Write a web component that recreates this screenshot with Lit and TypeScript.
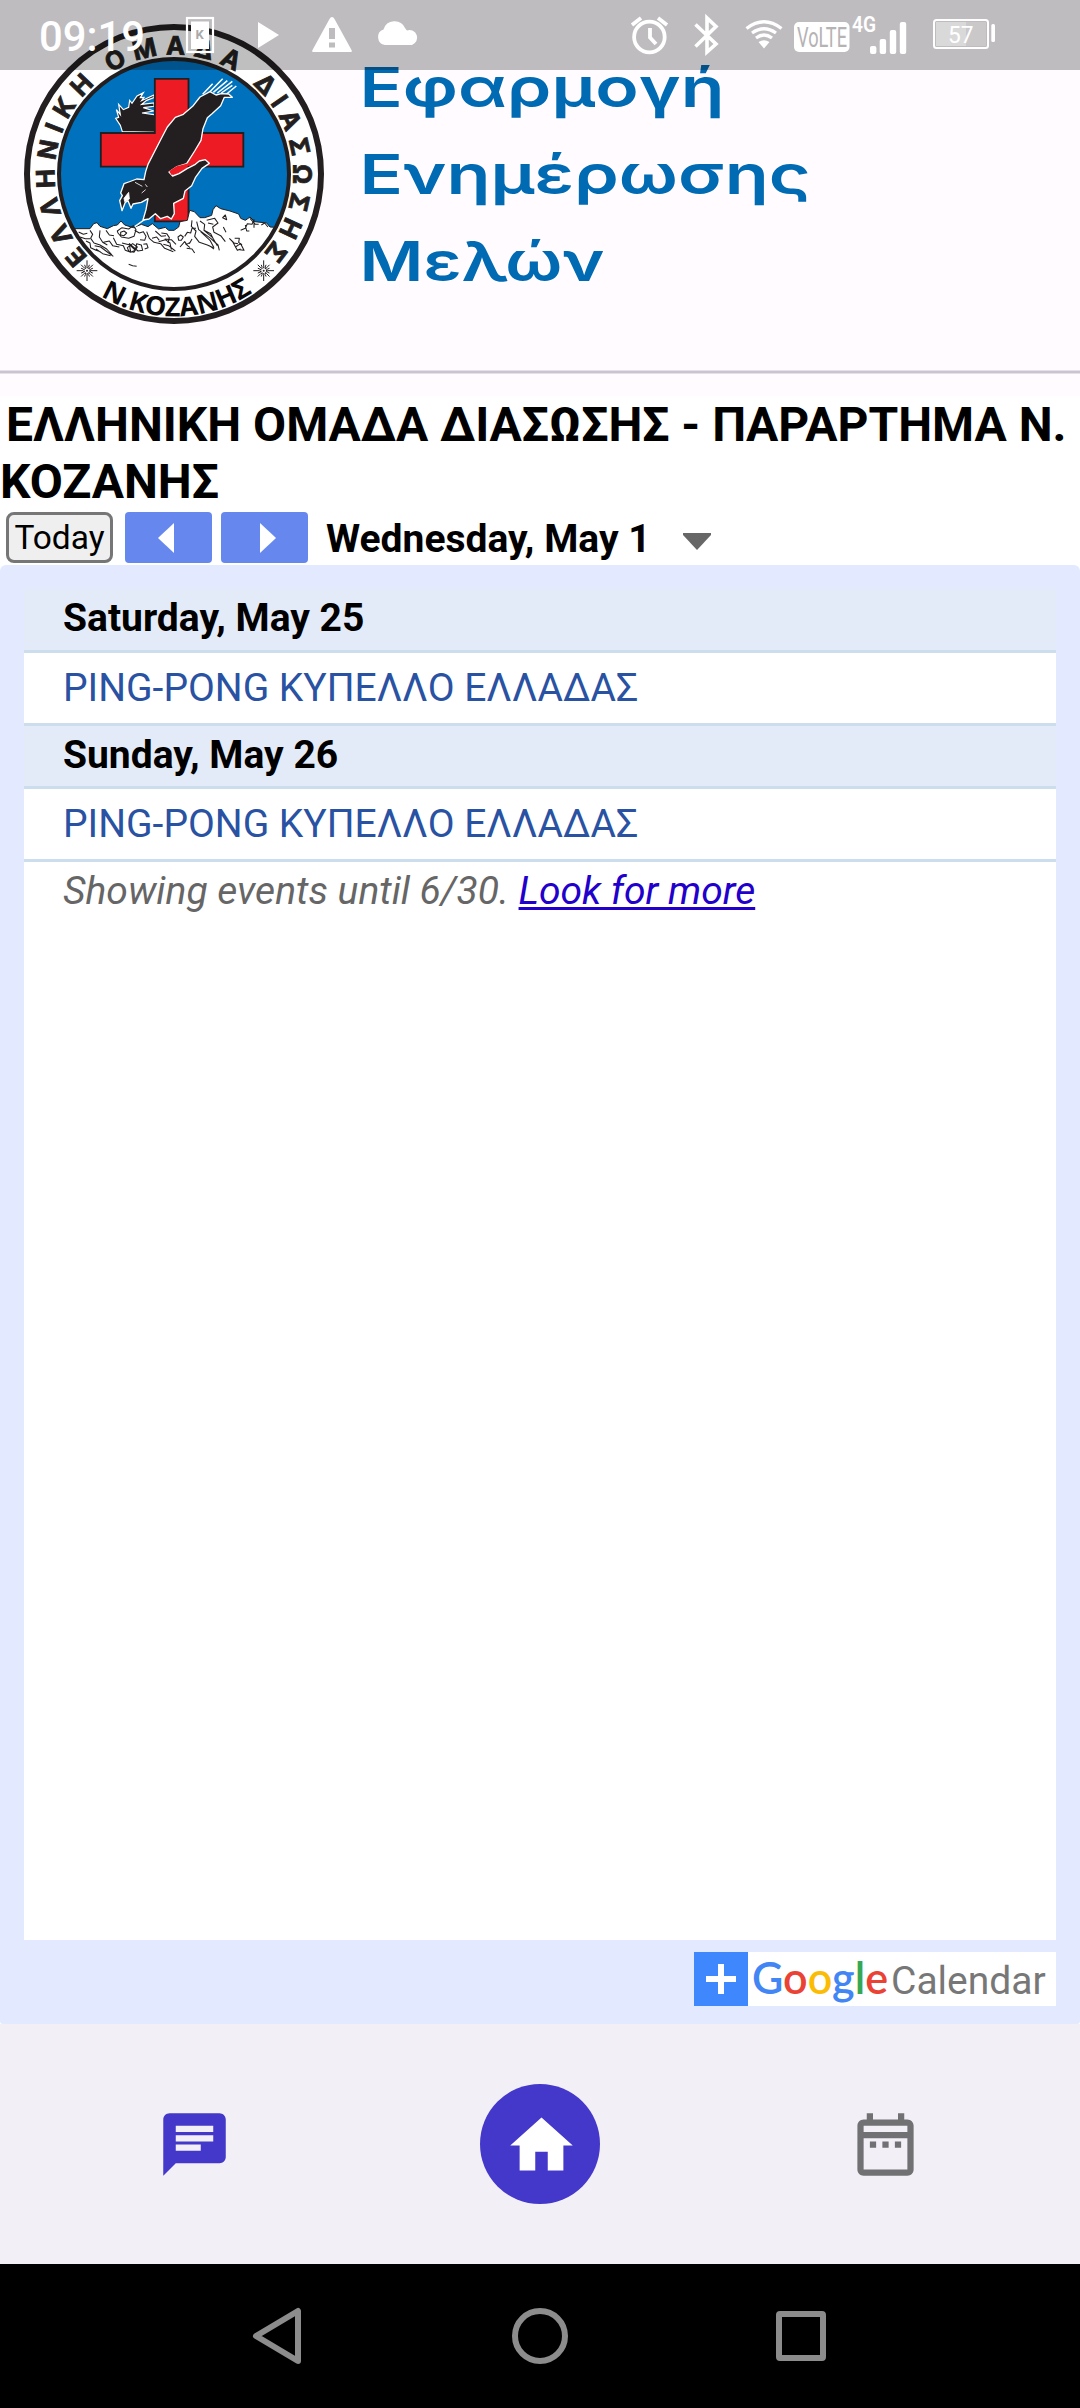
import { LitElement, html, css, svg } from "lit";
import { customElement, property } from "lit/decorators.js";

interface DayGroup {
  day: string;
  events: string[];
}

const DAYS: DayGroup[] = [
  { day: "Saturday, May 25", events: ["PING-PONG ΚΥΠΕΛΛΟ ΕΛΛΑΔΑΣ"] },
  { day: "Sunday, May 26", events: ["PING-PONG ΚΥΠΕΛΛΟ ΕΛΛΑΔΑΣ"] },
];

/* Point on a circle around the emblem centre; angle is measured clockwise from the top. */
const polar = (r: number, deg: number) => {
  const a = (deg * Math.PI) / 180;
  return `${(522 + r * Math.sin(a)).toFixed(1)} ${(521 - r * Math.cos(a)).toFixed(1)}`;
};

const star = (cx: number, cy: number) => {
  let d = "";
  for (let i = 0; i < 16; i++) {
    const a = (i * Math.PI) / 8;
    const r = i % 4 === 0 ? 31 : i % 2 === 0 ? 25 : 19;
    d += `M${cx + 12 * Math.cos(a)} ${cy + 12 * Math.sin(a)}L${cx + r * Math.cos(a)} ${cy + r * Math.sin(a)}`;
  }
  return svg`<path d=${d} stroke="#231f20" stroke-width="3" fill="none"/>
    <circle cx=${cx} cy=${cy} r="9.500" fill="none" stroke="#231f20" stroke-width="5" stroke-dasharray="4 2"/>
    <circle cx=${cx} cy=${cy} r="3" fill="#231f20"/>`;
};

@customElement("team-emblem")
class TeamEmblem extends LitElement {
  static styles = css`
    :host { display: block; width: 300px; height: 300px; flex: none; }
    svg { display: block; width: 100%; height: 100%; }
    .ring { font-family: Inter, "Open Sans", sans-serif; font-weight: 700; font-size: 76px; fill: #231f20; stroke: #231f20; stroke-width: 2.500px; }
    .town { font-family: "Noto Sans", "Open Sans", sans-serif; font-weight: 700; font-size: 79px; fill: #0a0809; }
  `;

  render() {
    return html`<svg viewBox="72 71 900 900">
      <defs>
        <clipPath id="disc"><circle cx="522" cy="521" r="343" /></clipPath>
        <path id="w1" d="M${polar(358, -134)}A358 358 0 0 1 ${polar(358, -20)}" />
        <path id="w2" d="M${polar(358, -32)}A358 358 0 0 1 ${polar(358, 60)}" />
        <path id="w3" d="M${polar(358, 41)}A358 358 0 0 1 ${polar(358, 150)}" />
        <path id="w4" d="M${polar(427, 211)}A427 427 0 0 0 ${polar(427, 130)}" />
      </defs>
      <circle cx="522" cy="521" r="441" fill="#fff" stroke="#231f20" stroke-width="18" />
      <g clip-path="url(#disc)">
        <rect x="170" y="170" width="710" height="710" fill="#0071bc" />
        <path d="M367 394L361 375L347 354L356 351L349 328L361 343L356 312L370 328L386 321L389 300L396 309L411 287L430 277L421 292L432 291L425 301L462 284V292L440 300L425 312L462 308V318L430 322L462 332L426 338L462 343H470V396z" fill="#231f20" stroke="#fff" stroke-width="3.5" />
        <path d="M464.500 235.500H565.500V398H730V499H565.500V663H464.500V499H302.500V398H464.500z" fill="#ed1c24" stroke="#231f20" stroke-width="5.500" />
        <path d="M150 690L215 685H270L281 670L291 667L300 678L322 685L340 676L352 674L363 662L374 674L400 682L424 672L444 679L457 670L476 686L496 681L506 690H522L536 680L540 664L562 660L569 630L583 634L600 652H614L635 645L639 628L648 616L662 625L690 632L716 641L722 654L736 660L750 650L764 664L800 668L810 680L860 683V900H150z" fill="#fff" stroke="#231f20" stroke-width="3" />
        <g fill="none" stroke="#231f20" stroke-width="3.200" stroke-linejoin="round">
          <path d="M236 695l14 7 12-3M240 710l16 5 14 0M258 722l12 6 2 14 16 8 14 4M270 690l8 12-6 12 10 14 18 6 20 12 16 18M284 736l18 4 24 18 14 10M288 746l20 14 24 6M300 690l-2 20 10 16 14 8M310 726l18-4 10 14 20 4M318 690l10 14 14 2" />
          <path d="M352 692l14-10 20 4 14-10 8 12-6 20-16 6-22-4-10-12zM362 696l10-4 8 6-8 8-10-2zM404 690l14 8 12-4 8 14-4 12-14-2M340 712l10 20 20 4 6 14 16 6M366 728l24 6 14 14 8-10M382 742l16-12 14 10-10 16-16-4zM388 730l4 26 14-6 4-20 14 4 4 16-14 2zM430 732l10-2 4 12-10 4" />
          <path d="M440 694l8 20 14 12 20 4 12 14 26 10M456 714l14-4 8 10M466 692l18 16 14-2M484 698l16 2 8 12-4 16M476 724l20-6 14 10 4 20M490 732l16 4 20 16M494 716l20 2 14 14M534 710l8-6 8 6-6 10-8 0zM540 740l14-16 6 8 10-6M554 708l8-12 10 2 4-14 12 0M560 744l16 2 8 12M556 730l14 12M576 716l-8 14" />
          <path d="M576 660l-2 18 14 14-4 16 14 18 24 8 18 8M590 664l6 24 16 12 20 14 22 20 4 16M600 662l14 10-2 18 20 10 8 16M602 694l28 26 12 22M612 690l26 22 14 24M620 660l24-6 10 14-16 12 4 16 20 10 14 18M640 672l-16-4M668 652l8-8 4 14zM670 680l8 16M688 714l14 14 12 2M704 714l14 0-2 12 10 8M698 724l14 26 10-4M628 736l14 10" />
          <path d="M722 690l14-6 6-14 14 2 6-14 0 24M736 674l4 18 8 0M750 654l16 18 10 0M784 674l10-6 10 12M706 740l16-10 10 20-14-2M386 792l12 4 12 2" />
        </g>
        <path d="M608 282L638 250M626 278L668 235M640 276L682 241M652 278L697 243M664 278L697 255M676 284L709 257M404 679L436 656" stroke="#fff" stroke-width="4.500" fill="none" />
        <path d="M600 290L578 318L550 342L526 351L502 380L480 422L463 455L444 492L437 514L432 538L410 536L386 545L372 550L362 578L367 586L359 601L366 631L376 606L384 601L393 624L399 611L424 606L444 595L438 628L429 659L447 656L466 640L482 655L502 648L514 656L523 640L521 609L550 594L555 572L575 556L586 532L606 504L628 489L616 478L598 482L586 492L561 505L537 520L518 527L507 515L529 500L560 490L584 452L603 420L609 385L622 352L636 340L662 316L673 291H697L686 281L664 280L648 284L630 274z" fill="#231f20" stroke="#fff" stroke-width="4" stroke-linejoin="round" />
        <path d="M508 512L530 498L566 489L590 482L580 491L556 498L532 508L514 524z" fill="#ed1c24" />
        <path d="M372 594l14-18 2 20-14 8zM436 552l6 8M425 578l12-10M405 546l22 12" fill="#fff" stroke="#fff" stroke-width="2.500" />
      </g>
      <circle cx="522" cy="521" r="345" fill="none" stroke="#231f20" stroke-width="12" />
      <text class="ring"><textPath href="#w1" textLength="578">ΕΛΛΗΝΙΚΗ</textPath></text>
      <text class="ring"><textPath href="#w2" textLength="394">ΟΜΑΔΑ</textPath></text>
      <text class="ring"><textPath href="#w3" textLength="566">ΔΙΑΣΩΣΗΣ</textPath></text>
      <text class="town"><textPath href="#w4" textLength="480" lengthAdjust="spacingAndGlyphs">Ν.ΚΟΖΑΝΗΣ</textPath></text>
      ${star(261, 811)} ${star(791, 811)}
    </svg>`;
  }
}

@customElement("status-bar")
class StatusBar extends LitElement {
  static styles = css`
    :host { display: block; height: 70px; background: rgba(0, 0, 0, 0.25); }
    svg { display: block; }
    text { font-family: Roboto, sans-serif; fill: #fff; }
    .clock { font-size: 42.500px; font-weight: 500; }
    .k { font-size: 13px; font-weight: 700; fill: #aaa; }
    .volte { font-size: 28px; fill: #b5b3b4; }
    .net { font-size: 22px; font-weight: 600; }
    .pct { font-size: 24px; }
  `;

  render() {
    return html`<svg width="1080" height="70" viewBox="0 0 1080 70" fill="#fff">
      <text class="clock" x="39" y="51.300" textLength="106" lengthAdjust="spacingAndGlyphs">09:19</text>
      <rect x="187" y="18" width="26" height="34" fill="none" stroke="#fff" stroke-width="2.200" />
      <rect x="191" y="21.500" width="18" height="27.500" />
      <text class="k" x="195.500" y="39">K</text>
      <path d="M258 22L279 35L258 48z" />
      <path fill-rule="evenodd" d="M332 17q1.500 0 2.500 2L351.500 50q1 2-1 2H313.500q-2 0-1-2L329.500 19q1-2 2.500-2zM329 28v11h6v-11zM329 42.500v5h6v-5z" />
      <path d="M385 45a8 8 0 0 1-1.500-15.500a11.500 11.500 0 0 1 21.500-1.500q1.500 2 2 2.500a7.300 7.300 0 0 1 5 14.500z" />
      <g fill="none" stroke="#fff" stroke-width="3.800">
        <circle cx="649.400" cy="37" r="15.300" />
        <path d="M650 28V37.500L656 44M632 25L641 18M658 18L667 25" />
      </g>
      <path d="M695.500 24.500L716 44L707 52V18L716 26.500L695.500 46.500" fill="none" stroke="#fff" stroke-width="3.600" />
      <g fill="none" stroke="#fff" stroke-width="3.300">
        <path d="M746.500 28.500Q764 15 781.500 28.500M752 33Q764 24.500 776 33M756 38Q764 32 772 38" />
      </g>
      <path d="M764 48.500L758.500 42Q764 38.500 769.500 42z" />
      <rect x="794" y="22" width="55.500" height="30" rx="5" />
      <text class="volte" x="797" y="46.500" textLength="50" lengthAdjust="spacingAndGlyphs">VoLTE</text>
      <text class="net" x="852" y="32" textLength="24" lengthAdjust="spacingAndGlyphs">4G</text>
      <rect x="870" y="46" width="6.400" height="8" rx="2" />
      <rect x="879.700" y="39" width="6.400" height="15" rx="2" />
      <rect x="889.800" y="30" width="6.400" height="24" rx="2" />
      <rect x="899.800" y="22" width="6.400" height="32" rx="2" />
      <rect x="936" y="22" width="50" height="24" fill="#cac8c9" />
      <rect x="936" y="22" width="30" height="24" fill="#dad9da" />
      <rect x="934" y="20" width="54" height="28" rx="2.500" fill="none" stroke="#fff" stroke-width="2" />
      <rect x="991.300" y="24" width="3.700" height="18" rx="1.500" />
      <text class="pct" x="948" y="43" textLength="25.500" lengthAdjust="spacingAndGlyphs">57</text>
    </svg>`;
  }
}

@customElement("agenda-day")
class AgendaDay extends LitElement {
  @property({ attribute: false }) group!: DayGroup;

  static styles = css`
    :host { display: block; }
    .day, .event { box-sizing: border-box; border-bottom: 3px solid #cde; padding-left: 39px; font-size: 39px; }
    .day { height: 63.500px; line-height: 58px; background: #e4ebf8; font-weight: 700; }
    .event { height: 73px; line-height: 70px; color: #2952a3; }
  `;

  render() {
    return html`<div class="day">${this.group.day}</div>
      ${this.group.events.map((e) => html`<div class="event">${e}</div>`)}`;
  }
}

@customElement("app-root")
class AppRoot extends LitElement {
  static styles = css`
    :host {
      display: flex; flex-direction: column; position: relative; width: 1080px; height: 2408px;
      overflow: hidden; background: #fff; color: #000; font-family: Roboto, sans-serif;
    }
    svg { display: block; }
    status-bar { position: absolute; top: 0; left: 0; right: 0; }
    .head { display: flex; box-sizing: border-box; height: 370px; padding: 24px 0 0 24px; gap: 36px; background: #fffbff; flex: none; }
    .title { font-family: Inter, "Open Sans", sans-serif; font-weight: 600; font-size: 55px; fill: #006ab3; }
    .rule { height: 2px; background: #cac4d0; border: solid #e4dfe8; border-width: 1px 0; flex: none; }
    .gap { height: 22px; background: #fffbff; flex: none; }
    h1 { margin: 0; height: 116px; font-size: 48px; line-height: 57px; font-weight: 700; text-indent: 6px; letter-spacing: -0.02px; flex: none; }
    .tools { display: flex; align-items: center; height: 51px; padding: 0 6px 2px; flex: none; }
    button { font-family: inherit; color: #000; box-sizing: border-box; height: 51px; }
    .today { width: 107px; padding: 0; font-size: 33.500px; line-height: 40px; background: #efefef; border: 3px solid #767676; border-radius: 8px; margin-right: 12px; text-align: center; }
    .step { width: 87px; padding: 0; border: 0; border-radius: 4px; background: #68e; margin-right: 9px; display: flex; align-items: center; justify-content: center; }
    .prev { padding-right: 6px; }
    .next { padding-left: 6px; }
    .when { font-size: 39px; font-weight: 700; margin-left: 9px; line-height: 51px; padding-top: 4px; }
    .caret { margin: 7px 0 0 32px; }
    .cal { display: flex; flex-direction: column; box-sizing: border-box; height: 1459px; padding: 24px 24px 18px; background: #e3e9ff; border-radius: 6px 6px 3px 3px; flex: none; }
    .list { display: flex; flex-direction: column; height: 1351px; background: #fff; }
    .more { padding-left: 39px; font-size: 39px; line-height: 59px; font-style: italic; color: #666; }
    .more a { color: #20c; text-decoration: underline; text-decoration-thickness: 3px; text-underline-offset: 3px; }
    .foot { display: flex; align-self: flex-end; margin-top: 12px; width: 362px; height: 54px; background: #fff; align-items: center; }
    .plus { width: 54px; height: 54px; background: #3f87fc; flex: none; }
    .google { font-family: Lato, sans-serif; font-weight: 600; font-size: 44px; }
    .word { font-size: 39px; line-height: 54px; color: #777; margin-left: 2px; padding-top: 4px; }
    .tabs { display: grid; grid-template-columns: 1fr 1fr 1fr; box-sizing: border-box; height: 240px; padding: 0 22px; background: #f3eff7; align-items: center; justify-items: center; flex: none; }
    .tabs svg { width: 75px; height: 75px; }
    .home { display: flex; width: 120px; height: 120px; border-radius: 50%; background: #4338ca; align-items: center; justify-content: center; box-sizing: border-box; padding: 2px 0 0 3px; }
    .keys { flex: 1; background: #000; }
  `;

  render() {
    return html`
      <header class="head">
        <team-emblem></team-emblem>
        <svg width="690" height="336" viewBox="360 24 690 336">
          <text class="title" x="359.500" y="107.300" textLength="365" lengthAdjust="spacingAndGlyphs">Εφαρμογή</text>
          <text class="title" x="359.500" y="194.200" textLength="451" lengthAdjust="spacingAndGlyphs">Ενημέρωσης</text>
          <text class="title" x="359.500" y="281" textLength="245" lengthAdjust="spacingAndGlyphs">Μελών</text>
        </svg>
      </header>
      <div class="rule"></div>
      <div class="gap"></div>
      <h1>ΕΛΛΗΝΙΚΗ ΟΜΑΔΑ ΔΙΑΣΩΣΗΣ - ΠΑΡΑΡΤΗΜΑ Ν. ΚΟΖΑΝΗΣ</h1>
      <div class="tools">
        <button class="today">Today</button>
        <button class="step prev"><svg width="16" height="30"><path d="M16 0V30L0 15z" fill="#fff" /></svg></button>
        <button class="step next"><svg width="16" height="30"><path d="M0 0V30L16 15z" fill="#fff" /></svg></button>
        <span class="when">Wednesday, May 1</span>
        <svg class="caret" width="28" height="17"><path d="M0 0H28V2L14 17L0 2z" fill="#676767" /></svg>
      </div>
      <section class="cal">
        <div class="list">
          ${DAYS.map((g) => html`<agenda-day .group=${g}></agenda-day>`)}
          <div class="more">Showing events until 6/30. <a>Look for more</a></div>
        </div>
        <div class="foot">
          <svg class="plus" viewBox="0 0 54 54"><path d="M24 12h6v12h12v6H30v12h-6V30H12v-6h12z" fill="#fff" /></svg>
          <svg width="141" height="54">
            <text class="google" x="4" y="42" textLength="136" lengthAdjust="spacingAndGlyphs"><tspan fill="#4285f4">G</tspan><tspan fill="#ea4335">o</tspan><tspan fill="#fbbc05">o</tspan><tspan fill="#4285f4">g</tspan><tspan fill="#34a853">l</tspan><tspan fill="#ea4335">e</tspan></text>
          </svg>
          <span class="word">Calendar</span>
        </div>
      </section>
      <nav class="tabs">
        <svg viewBox="0 0 24 24" fill="#4338ca"><path d="M20 2H4c-1.100 0-1.990.9-1.990 2L2 22l4-4h14c1.100 0 2-.9 2-2V4c0-1.100-.9-2-2-2zM6 9h12v2H6V9zm8 5H6v-2h8v2zm4-6H6V6h12v2z" /></svg>
        <div class="home"><svg viewBox="0 0 24 24" fill="#fff"><path d="M10 20v-6h4v6h5v-8h3L12 3 2 12h3v8z" /></svg></div>
        <svg viewBox="0 0 24 24" fill="#717173"><path d="M7 11h2v2H7v-2zm14-5v14c0 1.100-.9 2-2 2H5c-1.110 0-2-.9-2-2l.01-14c0-1.100.88-2 1.990-2h1V2h2v2h8V2h2v2h1c1.100 0 2 .9 2 2zM5 8h14V6H5v2zm14 12V10H5v10h14zm-4-7h2v-2h-2v2zm-4 0h2v-2h-2v2z" /></svg>
      </nav>
      <div class="keys">
        <svg width="1080" height="144" viewBox="0 2264 1080 144" fill="none" stroke="#8c8c8c" stroke-width="6" stroke-linejoin="round">
          <path d="M298 2311V2361L256 2336z" />
          <circle cx="540" cy="2336" r="25" />
          <rect x="779" y="2314" width="44" height="44" rx="1" />
        </svg>
      </div>
      <status-bar></status-bar>
    `;
  }
}
